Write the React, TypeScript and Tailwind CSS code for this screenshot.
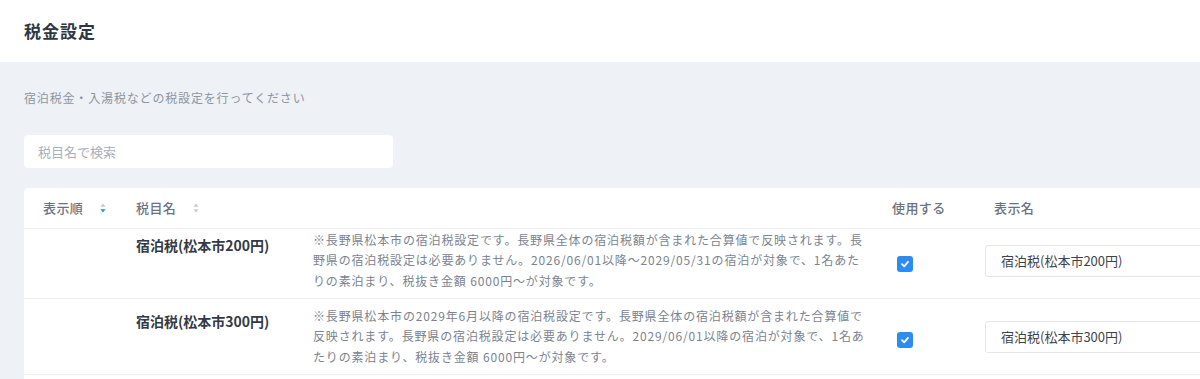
import React from "react";

const taxes = [
  {
    name: "宿泊税(松本市200円)",
    note: "※長野県松本市の宿泊税設定です。長野県全体の宿泊税額が含まれた合算値で反映されます。長野県の宿泊税設定は必要ありません。2026/06/01以降～2029/05/31の宿泊が対象で、1名あたりの素泊まり、税抜き金額 6000円～が対象です。",
    label: "宿泊税(松本市200円)",
  },
  {
    name: "宿泊税(松本市300円)",
    note: "※長野県松本市の2029年6月以降の宿泊税設定です。長野県全体の宿泊税額が含まれた合算値で反映されます。長野県の宿泊税設定は必要ありません。2029/06/01以降の宿泊が対象で、1名あたりの素泊まり、税抜き金額 6000円～が対象です。",
    label: "宿泊税(松本市300円)",
  },
];

function SortIcon({ active }: { active?: boolean }) {
  return (
    <svg width="6" height="10" viewBox="0 0 6 10" className="shrink-0">
      <path d="M3 0.5 L5.6 3.8 H0.4 Z" fill="#c5cad3" />
      <path d="M3 9.5 L5.6 6.2 H0.4 Z" fill={active ? "#2d8cf0" : "#c5cad3"} />
    </svg>
  );
}

function Checkbox() {
  return (
    <div className="w-4 h-4 rounded-[3px] bg-[#2d8cf0] flex items-center justify-center">
      <svg width="10" height="10" viewBox="0 0 10 10">
        <path d="M2 5.2 L4.2 7.3 L8 2.9" fill="none" stroke="white" strokeWidth="1.8" strokeLinecap="round" strokeLinejoin="round" />
      </svg>
    </div>
  );
}

export default function App() {
  return (
    <div
      className="w-[1200px] h-[379px] overflow-hidden bg-[#eef1f5]"
      style={{ fontFamily: '"Noto Sans CJK JP", "Noto Sans", sans-serif' }}
    >
      {/* Page header */}
      <div className="h-[62px] bg-white flex items-center px-6">
        <h1 className="text-[17px] font-bold tracking-[1px] text-[#2f3744]">税金設定</h1>
      </div>

      <div className="pl-6 pt-[27px]">
        <p className="text-[12px] leading-[18px] tracking-[0.07em] text-[#8c95a3]">
          宿泊税金・入湯税などの税設定を行ってください
        </p>

        {/* Search */}
        <div className="mt-[28px] w-[369px] h-[33px] bg-white rounded-[4px] flex items-center px-[14px]">
          <span className="text-[13px] text-[#a9afba]">税目名で検索</span>
        </div>

        {/* Table */}
        <div className="mt-[20px] w-[1260px] bg-white rounded-tl-[4px]">
          <div className="h-[41px] flex items-center border-b border-[#eceff3] text-[13px] tracking-[0.03em] text-[#6b7382] font-medium">
            <div className="w-[112px] pl-[19px] flex items-center gap-[17px]">
              <span>表示順</span>
              <SortIcon active />
            </div>
            <div className="w-[177px] flex items-center gap-[17px]">
              <span>税目名</span>
              <SortIcon />
            </div>
            <div className="w-[567px]" />
            <div className="w-[105px] pl-[12px]">使用する</div>
            <div className="pl-[9px]">表示名</div>
          </div>

          <div className="h-[160px] overflow-hidden">
            {taxes.map((t, i) => (
              <div
                key={t.name}
                className={`h-[76px] flex items-center border-b border-[#eceff3] ${i === 0 ? "-mt-[6px]" : ""}`}
              >
                <div className="w-[112px]" />
                <div className="w-[177px] self-start pt-[9px]">
                  <span className="text-[14px] leading-[20px] font-bold text-[#333a44]">{t.name}</span>
                </div>
                <div className="w-[567px]">
                  <p className="w-[557.5px] text-[12px] leading-[20.5px] tracking-[0.07em] text-[#7b8391]">{t.note}</p>
                </div>
                <div className="w-[105px] pl-[17px] pt-[6px]">
                  <Checkbox />
                </div>
                <div className="w-[260px] h-[32px] border border-[#e3e6eb] rounded-[3px] flex items-center pl-[15px]">
                  <span className="text-[13px] text-[#3d4450]">{t.label}</span>
                </div>
              </div>
            ))}
          </div>
        </div>
      </div>
    </div>
  );
}
